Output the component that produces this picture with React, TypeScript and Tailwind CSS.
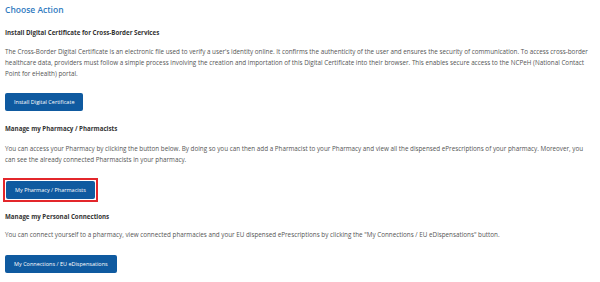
export default function App() {
  return (
    <div className="w-[600px] h-[282px] overflow-hidden bg-white px-[5px] pt-[3px] font-['Open_Sans',sans-serif]">
      <h1 className="text-[8.5px] leading-[13px] font-semibold text-[#2f7bbf]">Choose Action</h1>

      <section className="mt-[12px]">
        <h2 className="text-[6.2px] leading-[9px] font-bold text-[#333]">
          Install Digital Certificate for Cross-Border Services
        </h2>
        <p className="mt-[9px] text-[6.3px] leading-[11px] text-[#555]">
          The Cross-Border Digital Certificate is an electronic file used to verify a user's identity online. It
          confirms the authenticity of the user and ensures the security of communication. To access cross-border
          healthcare data, providers must follow a simple process involving the creation and importation of this
          Digital Certificate into their browser. This enables secure access to the NCPeH (National Contact Point for
          eHealth) portal.
        </p>
        <button className="mt-[14px] h-[18px] rounded-[2px] bg-[#0f5aa0] px-[9px] text-[5.5px] text-white">
          Install Digital Certificate
        </button>
      </section>

      <section className="mt-[13px]">
        <h2 className="text-[6.2px] leading-[9px] font-bold text-[#333]">Manage my Pharmacy / Pharmacists</h2>
        <p className="mt-[10px] text-[6.3px] leading-[11px] text-[#555]">
          You can access your Pharmacy by clicking the button below. By doing so you can then add a Pharmacist to your
          Pharmacy and view all the dispensed ePrescriptions of your pharmacy. Moreover, you can see the already
          connected Pharmacists in your pharmacy.
        </p>
        <div className="mt-[13px] inline-flex border-2 border-[#e3262b] p-[1px] -ml-[2px]">
          <button className="h-[18px] rounded-[2px] bg-[#0f5aa0] px-[9px] text-[5.5px] text-white">
            My Pharmacy / Pharmacists
          </button>
        </div>
      </section>

      <section className="mt-[10px]">
        <h2 className="text-[6.2px] leading-[9px] font-bold text-[#333]">Manage my Personal Connections</h2>
        <p className="mt-[8px] text-[6.3px] leading-[11px] text-[#555]">
          You can connect yourself to a pharmacy, view connected pharmacies and your EU dispensed ePrescriptions by
          clicking the "My Connections / EU eDispensations" button.
        </p>
        <button className="mt-[15px] h-[18px] rounded-[2px] bg-[#0f5aa0] px-[9px] text-[5.5px] text-white">
          My Connections / EU eDispensations
        </button>
      </section>
    </div>
  );
}
